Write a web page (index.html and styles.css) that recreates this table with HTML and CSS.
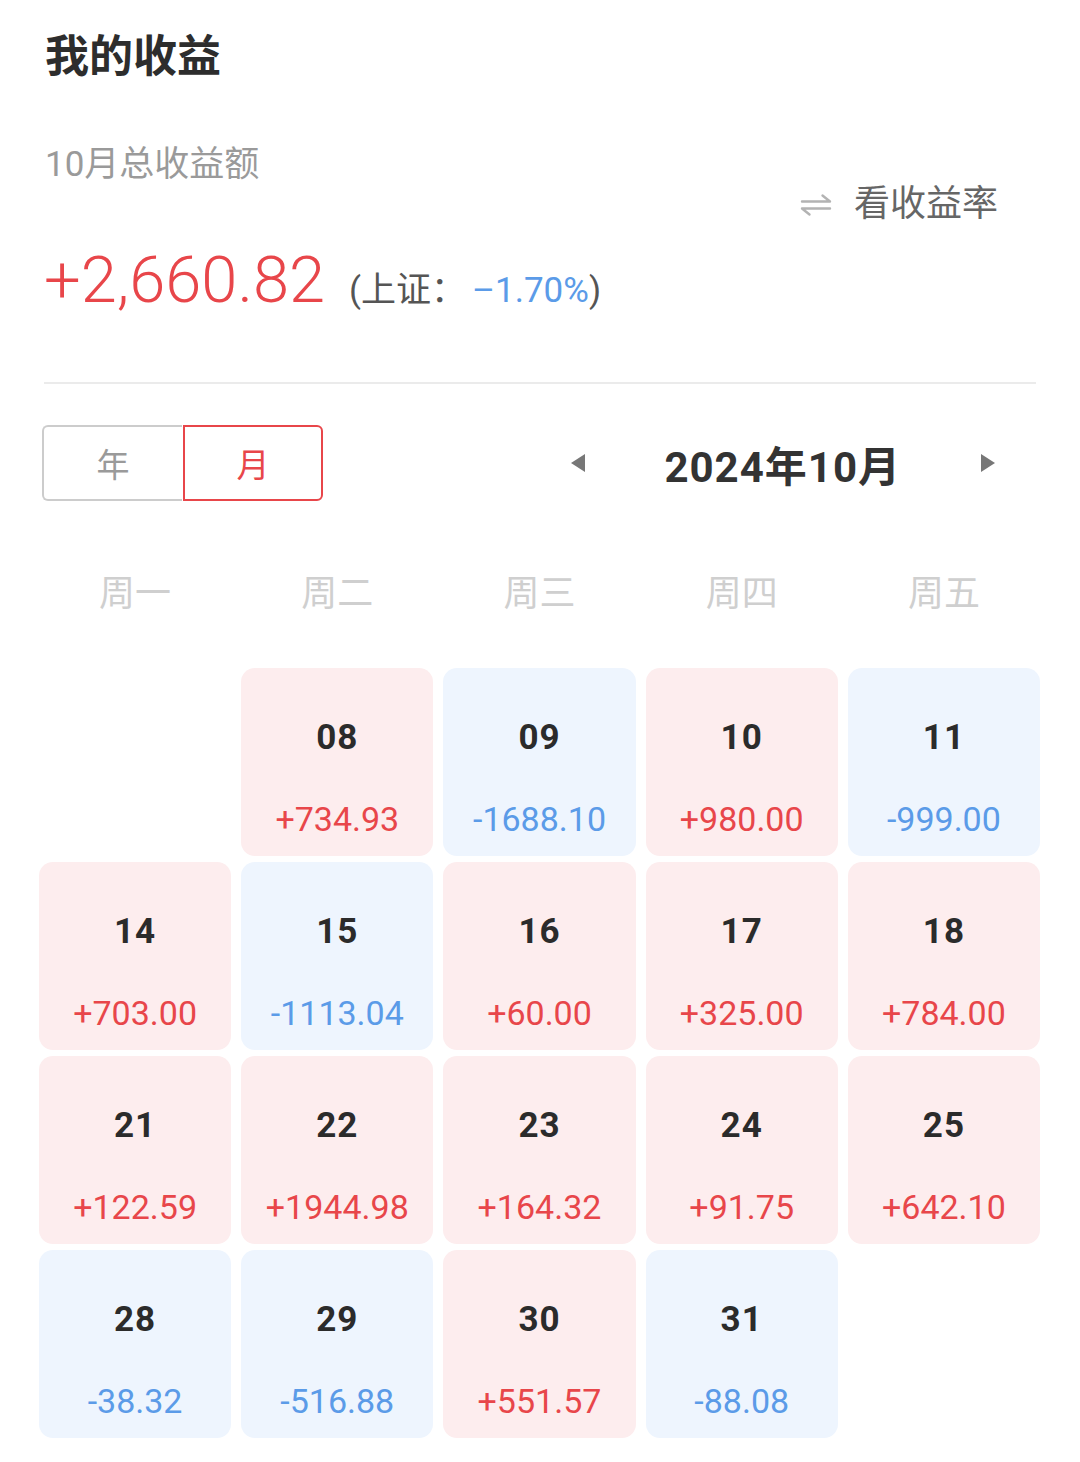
FILE: index.html
```html
<!DOCTYPE html>
<html lang="zh-CN">
<head>
<meta charset="utf-8">
<title>我的收益</title>
<link rel="stylesheet" href="styles.css">
</head>
<body>
<div class="page">
  <h1 class="title">我的收益</h1>

  <div class="summary">
    <div class="summary-left">
      <div class="sub">10月总收益额</div>
      <div class="amount-line">
        <span class="amount">+2,660.82</span>
        <span class="index">(上证：<span class="index-val">–1.70%</span>)</span>
      </div>
    </div>
    <div class="switch">
      <svg class="swap" width="32" height="24" viewBox="0 0 32 24" aria-hidden="true">
        <path d="M2 8.5 H30 L22.5 2.5" fill="none" stroke="#b3b3b3" stroke-width="2.4" stroke-linejoin="round" stroke-linecap="round"/>
        <path d="M30 15.5 H2 L9.5 21.5" fill="none" stroke="#b3b3b3" stroke-width="2.4" stroke-linejoin="round" stroke-linecap="round"/>
      </svg>
      <span class="switch-text">看收益率</span>
    </div>
  </div>

  <div class="divider"></div>

  <div class="controls">
    <div class="toggle">
      <div class="tab tab-year">年</div>
      <div class="tab tab-month">月</div>
    </div>
    <div class="nav">
      <span class="arrow arrow-left"></span>
      <span class="nav-title">2024年10月</span>
      <span class="arrow arrow-right"></span>
    </div>
  </div>

  <div class="calendar">
    <div class="week">
      <div>周一</div><div>周二</div><div>周三</div><div>周四</div><div>周五</div>
    </div>
    <div class="grid">
      <div class="cell empty"></div>
      <div class="cell up"><div class="day">08</div><div class="val">+734.93</div></div>
      <div class="cell down"><div class="day">09</div><div class="val">-1688.10</div></div>
      <div class="cell up"><div class="day">10</div><div class="val">+980.00</div></div>
      <div class="cell down"><div class="day">11</div><div class="val">-999.00</div></div>

      <div class="cell up"><div class="day">14</div><div class="val">+703.00</div></div>
      <div class="cell down"><div class="day">15</div><div class="val">-1113.04</div></div>
      <div class="cell up"><div class="day">16</div><div class="val">+60.00</div></div>
      <div class="cell up"><div class="day">17</div><div class="val">+325.00</div></div>
      <div class="cell up"><div class="day">18</div><div class="val">+784.00</div></div>

      <div class="cell up"><div class="day">21</div><div class="val">+122.59</div></div>
      <div class="cell up"><div class="day">22</div><div class="val">+1944.98</div></div>
      <div class="cell up"><div class="day">23</div><div class="val">+164.32</div></div>
      <div class="cell up"><div class="day">24</div><div class="val">+91.75</div></div>
      <div class="cell up"><div class="day">25</div><div class="val">+642.10</div></div>

      <div class="cell down"><div class="day">28</div><div class="val">-38.32</div></div>
      <div class="cell down"><div class="day">29</div><div class="val">-516.88</div></div>
      <div class="cell up"><div class="day">30</div><div class="val">+551.57</div></div>
      <div class="cell down"><div class="day">31</div><div class="val">-88.08</div></div>
      <div class="cell empty"></div>
    </div>
  </div>
</div>
</body>
</html>
```

FILE: styles.css
```css
* { box-sizing: border-box; }

body {
  margin: 0;
  background: #ffffff;
  font-family: Roboto, "Noto Sans CJK SC", sans-serif;
  color: #333;
}

.page {
  padding: 29px 44px 0 44px;
}

.title {
  margin: 0;
  font-size: 44px;
  line-height: 56px;
  font-weight: 700;
  color: #2d2d2d;
  padding-left: 1px;
}

.summary {
  margin-top: 55px;
  display: flex;
  justify-content: space-between;
  align-items: flex-start;
}

.sub {
  font-size: 35px;
  line-height: 50px;
  color: #9a9a9a;
  padding-left: 1px;
}

.amount-line {
  margin-top: 50px;
  display: flex;
  align-items: baseline;
  height: 80px;
  line-height: 80px;
}

.amount {
  font-size: 65px;
  color: #e8464a;
  font-weight: 300;
}

.index {
  margin-left: 24px;
  font-size: 35px;
  color: #555;
}

.index-val {
  color: #5b9be8;
  margin-left: 6px;
}

.switch {
  margin-top: 44px;
  margin-right: 38px;
  display: flex;
  align-items: center;
  height: 40px;
}

.swap {
  display: block;
  margin-right: 22px;
  margin-top: 2px;
}

.switch-text {
  font-size: 36px;
  line-height: 40px;
  color: #666;
}

.divider {
  margin-top: 62px;
  height: 2px;
  background: #ebebeb;
}

.controls {
  margin-top: 41px;
  display: flex;
  justify-content: space-between;
  align-items: center;
}

.toggle {
  display: flex;
  margin-left: -2px;
}

.tab {
  width: 140px;
  height: 76px;
  display: flex;
  align-items: center;
  justify-content: center;
  font-size: 33px;
}

.tab-year {
  border: 2px solid #cccccc;
  border-right: none;
  border-radius: 6px 0 0 6px;
  color: #9a9a9a;
}

.tab-month {
  margin-left: 1px;
  border: 2.5px solid #e8464a;
  border-radius: 0 6px 6px 0;
  color: #e8464a;
}

.nav {
  display: flex;
  align-items: center;
  margin-right: 41px;
}

.arrow {
  width: 0;
  height: 0;
  border-top: 9px solid transparent;
  border-bottom: 9px solid transparent;
}

.arrow-left {
  border-right: 14px solid #777;
}

.arrow-right {
  border-left: 14px solid #777;
}

.nav-title {
  margin: 0 80px 0 79px;
  font-size: 42px;
  font-weight: 700;
  color: #333;
  letter-spacing: 1px;
}

.calendar {
  margin: 0 -4px 0 -5px;
}

.week {
  margin-top: 68px;
  display: grid;
  grid-template-columns: repeat(5, 1fr);
  column-gap: 10px;
  height: 50px;
  line-height: 50px;
  text-align: center;
  font-size: 36px;
  color: #cfcfcf;
}

.grid {
  margin-top: 49px;
  display: grid;
  grid-template-columns: repeat(5, 1fr);
  column-gap: 10px;
  row-gap: 6px;
}

.cell {
  height: 188px;
  border-radius: 14px;
  padding-top: 50px;
  text-align: center;
}

.cell.up { background: #fdedee; }
.cell.down { background: #eef5fe; }
.cell.empty { background: transparent; }

.day {
  font-size: 35px;
  line-height: 40px;
  font-weight: 700;
  color: #2b2b2b;
  letter-spacing: 1px;
}

.val {
  margin-top: 41px;
  font-size: 34px;
  line-height: 40px;
  font-weight: 400;
}

.up .val { color: #e8464a; }
.down .val { color: #5b9be8; }
```
